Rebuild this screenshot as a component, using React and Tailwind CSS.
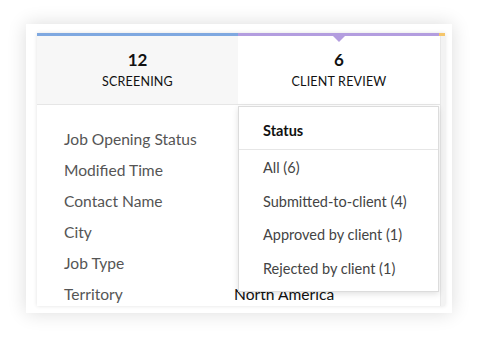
import React from 'react';

const fields = ['Job Opening Status', 'Modified Time', 'Contact Name', 'City', 'Job Type', 'Territory'];
const options = ['All (6)', 'Submitted-to-client (4)', 'Approved by client (1)', 'Rejected by client (1)'];

export default function App() {
    return (
        <div className="w-[478px] h-[342px] bg-white pt-[24px] pl-[26px]" style={{ fontFamily: 'Lato, "Open Sans", sans-serif' }}>
            <div className="w-[426px] h-[289px] bg-white shadow-[0_0_18px_rgba(0,0,0,0.14)] pt-[9px] pl-[11px]">
                <div className="relative w-[408px] h-[273px] bg-white shadow-[0_0_4px_rgba(0,0,0,0.12)] flex flex-col">
                    {/* stage bar */}
                    <div className="flex h-[3px]">
                        <div className="w-[201px] bg-[#7fa8e0]"></div>
                        <div className="w-[201px] bg-[#b39ddf]"></div>
                        <div className="flex-1 bg-[#f5c66b]"></div>
                    </div>
                    <div className="absolute left-[296px] top-[3px] w-0 h-0 border-l-[6px] border-r-[6px] border-t-[6px] border-l-transparent border-r-transparent border-t-[#b39ddf]"></div>

                    <div className="flex flex-1">
                        <div className="w-[403px] flex flex-col">
                            {/* header */}
                            <div className="flex h-[69px] border-b border-[#e6e6e6]">
                                <div className="w-[201px] bg-[#f7f7f7] flex flex-col items-center pt-[14px]">
                                    <div className="text-[17px] font-bold text-[#111] leading-[20px]">12</div>
                                    <div className="text-[12.5px] text-[#111] leading-[16px] mt-[4px] tracking-[0.2px]">SCREENING</div>
                                </div>
                                <div className="flex-1 flex flex-col items-center pt-[14px]">
                                    <div className="text-[17px] font-bold text-[#111] leading-[20px]">6</div>
                                    <div className="text-[12.5px] text-[#111] leading-[16px] mt-[4px] tracking-[0.2px]">CLIENT REVIEW</div>
                                </div>
                            </div>

                            {/* body */}
                            <div className="relative flex-1 flex">
                                <div className="w-[198px] flex flex-col pl-[27px] pt-[24px] gap-[11px]">
                                    {fields.map((f) => (
                                        <div key={f} className="text-[15.6px] leading-[20px] text-[#555]">{f}</div>
                                    ))}
                                </div>
                                <div className="flex-1 flex flex-col justify-end pb-[2px]">
                                    <div className="text-[15.6px] leading-[20px] text-[#111] -ml-[1px]">North America</div>
                                </div>

                                {/* dropdown */}
                                <div className="absolute left-[201px] top-[1px] w-[201px] h-[186px] bg-white border border-[#dcdcdc] shadow-[0_2px_6px_rgba(0,0,0,0.12)] flex flex-col">
                                    <div className="h-[43px] border-b border-[#e6e6e6] flex items-center pl-[24px] pt-[5px]">
                                        <span className="text-[14.5px] font-bold text-[#111]">Status</span>
                                    </div>
                                    <div className="flex flex-col pl-[24px] pt-[8px] gap-[14.5px]">
                                        {options.map((o) => (
                                            <div key={o} className="text-[14.5px] leading-[19px] text-[#444]">{o}</div>
                                        ))}
                                    </div>
                                </div>
                            </div>
                        </div>
                        {/* scroll strip */}
                        <div className="flex-1 bg-[#f3f3f3] border-l border-[#e8e8e8]"></div>
                    </div>
                </div>
            </div>
        </div>
    );
}
